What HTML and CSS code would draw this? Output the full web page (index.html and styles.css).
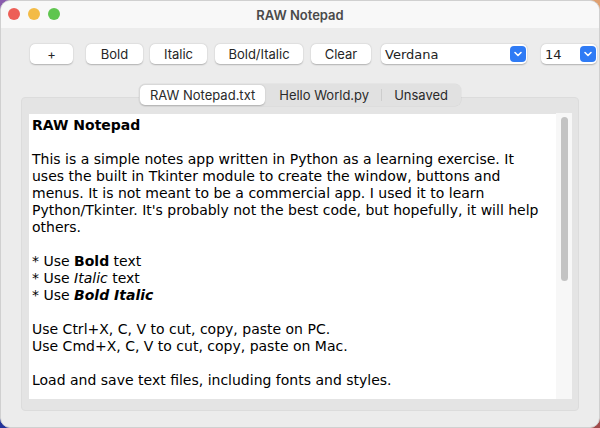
FILE: index.html
```html
<!DOCTYPE html>
<html>
<head>
<meta charset="utf-8">
<link rel="stylesheet" href="styles.css">
</head>
<body>
<div class="window">
  <div class="titlebar">
    <div class="lights">
      <span class="light red"></span>
      <span class="light yellow"></span>
      <span class="light green"></span>
    </div>
    <div class="title">RAW Notepad</div>
  </div>
  <div class="toolbar">
    <button class="btn w-plus">+</button>
    <button class="btn w-bold">Bold</button>
    <button class="btn w-italic">Italic</button>
    <button class="btn w-bi">Bold/Italic</button>
    <button class="btn w-clear">Clear</button>
    <div class="select w-font"><span>Verdana</span><span class="arrow"><svg width="16" height="16" viewBox="0 0 16 16"><path d="M5 6.5 L8 9.5 L11 6.5" fill="none" stroke="#fff" stroke-width="1.6" stroke-linecap="round" stroke-linejoin="round"/></svg></span></div>
    <div class="select w-size"><span>14</span><span class="arrow"><svg width="16" height="16" viewBox="0 0 16 16"><path d="M5 6.5 L8 9.5 L11 6.5" fill="none" stroke="#fff" stroke-width="1.6" stroke-linecap="round" stroke-linejoin="round"/></svg></span></div>
  </div>
  <div class="notebook">
    <div class="tabs">
      <div class="tab active">RAW Notepad.txt</div>
      <div class="tab">Hello World.py</div>
      <div class="sep"></div>
      <div class="tab">Unsaved</div>
    </div>
    <div class="panel">
      <div class="text">
        <div class="line"><b>RAW Notepad</b></div>
        <div class="line"></div>
        <div class="line">This is a simple notes app written in Python as a learning exercise. It</div>
        <div class="line">uses the built in Tkinter module to create the window, buttons and</div>
        <div class="line">menus. It is not meant to be a commercial app. I used it to learn</div>
        <div class="line">Python/Tkinter. It's probably not the best code, but hopefully, it will help</div>
        <div class="line">others.</div>
        <div class="line"></div>
        <div class="line">* Use <b>Bold</b> text</div>
        <div class="line">* Use <i>Italic</i> text</div>
        <div class="line">* Use <b><i>Bold Italic</i></b></div>
        <div class="line"></div>
        <div class="line">Use Ctrl+X, C, V to cut, copy, paste on PC.</div>
        <div class="line">Use Cmd+X, C, V to cut, copy, paste on Mac.</div>
        <div class="line"></div>
        <div class="line">Load and save text files, including fonts and styles.</div>
      </div>
      <div class="scrollbar"><div class="thumb"></div></div>
    </div>
  </div>
</div>
</body>
</html>
```

FILE: styles.css
```css
html, body {
  margin: 0;
  padding: 0;
}
body {
  width: 600px;
  height: 428px;
  overflow: hidden;
  background: conic-gradient(from 0deg at 50% 50%, #e0a070 0deg 90deg, #a04a4a 90deg 180deg, #24339a 180deg 270deg, #8a5cae 270deg 360deg);
  font-family: Inter, "Liberation Sans", sans-serif;
}
.window {
  width: 600px;
  height: 428px;
  box-sizing: border-box;
  border-radius: 10px;
  overflow: hidden;
  background: #ececec;
  display: flex;
  flex-direction: column;
  border: 1px solid #d0d0d0;
}
.titlebar {
  height: 27px;
  background: #f8f8f8;
  display: flex;
  align-items: center;
  justify-content: center;
  position: relative;
  flex-shrink: 0;
}
.lights {
  position: absolute;
  left: 7px;
  top: 7px;
  display: flex;
  gap: 8px;
}
.light {
  width: 12px;
  height: 12px;
  border-radius: 50%;
}
.red { background: #ed5f57; }
.yellow { background: #f3bb46; }
.green { background: #5fc54f; }
.title {
  font-size: 13px;
  font-weight: 600;
  color: #4a4a4a;
}
.toolbar {
  display: flex;
  align-items: center;
  padding: 16px 0 0 29px;
  height: 20px;
}
.btn {
  height: 20px;
  box-sizing: border-box;
  border: none;
  border-radius: 5px;
  background: #ffffff;
  box-shadow: 0 0.5px 1.5px rgba(0,0,0,0.25);
  font-family: Inter, "Liberation Sans", sans-serif;
  font-size: 13px;
  color: #262626;
  padding: 0;
  margin-right: 7px;
}
.w-plus { width: 43px; margin-right: 13px; }
.w-bold { width: 57px; }
.w-italic { width: 57px; margin-right: 8px; }
.w-bi { width: 88px; margin-right: 8px; }
.w-clear { width: 60px; margin-right: 10px; }
.select {
  height: 20px;
  box-sizing: border-box;
  background: #fff;
  border-radius: 5px;
  box-shadow: 0 0.5px 1.5px rgba(0,0,0,0.25);
  display: flex;
  align-items: center;
  justify-content: space-between;
  padding: 0 1px 0 4px;
  font-family: "DejaVu Sans", Verdana, sans-serif;
  font-size: 13px;
  color: #222;
}
.w-font { width: 146px; margin-right: 14px; }
.w-size { width: 56px; }
.arrow {
  width: 16px;
  height: 16px;
  border-radius: 4px;
  background: #2f7bf5;
  display: flex;
}
.notebook {
  margin: 20px 20px 0 20px;
  display: flex;
  flex-direction: column;
  align-items: center;
}
.tabs {
  position: relative;
  z-index: 1;
  display: flex;
  align-items: center;
  background: #e1e1e1;
  border-radius: 6px;
  height: 22px;
  padding: 0 1px;
  box-shadow: 0 0 0 0.5px rgba(0,0,0,0.06);
}
.tab {
  font-size: 13px;
  color: #2a2a2a;
  height: 20px;
  display: flex;
  align-items: center;
  padding: 0 12px;
}
.tab.active {
  background: #fff;
  border-radius: 5px;
  box-shadow: 0 0.5px 1.5px rgba(0,0,0,0.22);
  padding: 0 10px;
  margin-right: 2px;
}
.sep {
  width: 1px;
  height: 12px;
  background: #cdcdcd;
}
.panel {
  align-self: stretch;
  margin-top: -9px;
  background: #e4e4e4;
  border: 1px solid #dcdcdc;
  border-radius: 4px;
  padding: 16px 6px 11px 7px;
  display: flex;
  height: 285px;
}
.text {
  flex: 1;
  background: #fff;
  font-family: "DejaVu Sans", Verdana, sans-serif;
  font-size: 14px;
  line-height: 17px;
  color: #000;
  padding: 3px 0 0 3px;
  overflow: hidden;
}
.line {
  height: 17px;
  white-space: pre;
}
.scrollbar {
  width: 16px;
  background: #f7f7f7;
  margin-top: -1px;
  padding: 4px 0 0 5px;
  box-sizing: border-box;
}
.thumb {
  width: 7px;
  height: 164px;
  border-radius: 4px;
  background: #c3c3c3;
}
```
